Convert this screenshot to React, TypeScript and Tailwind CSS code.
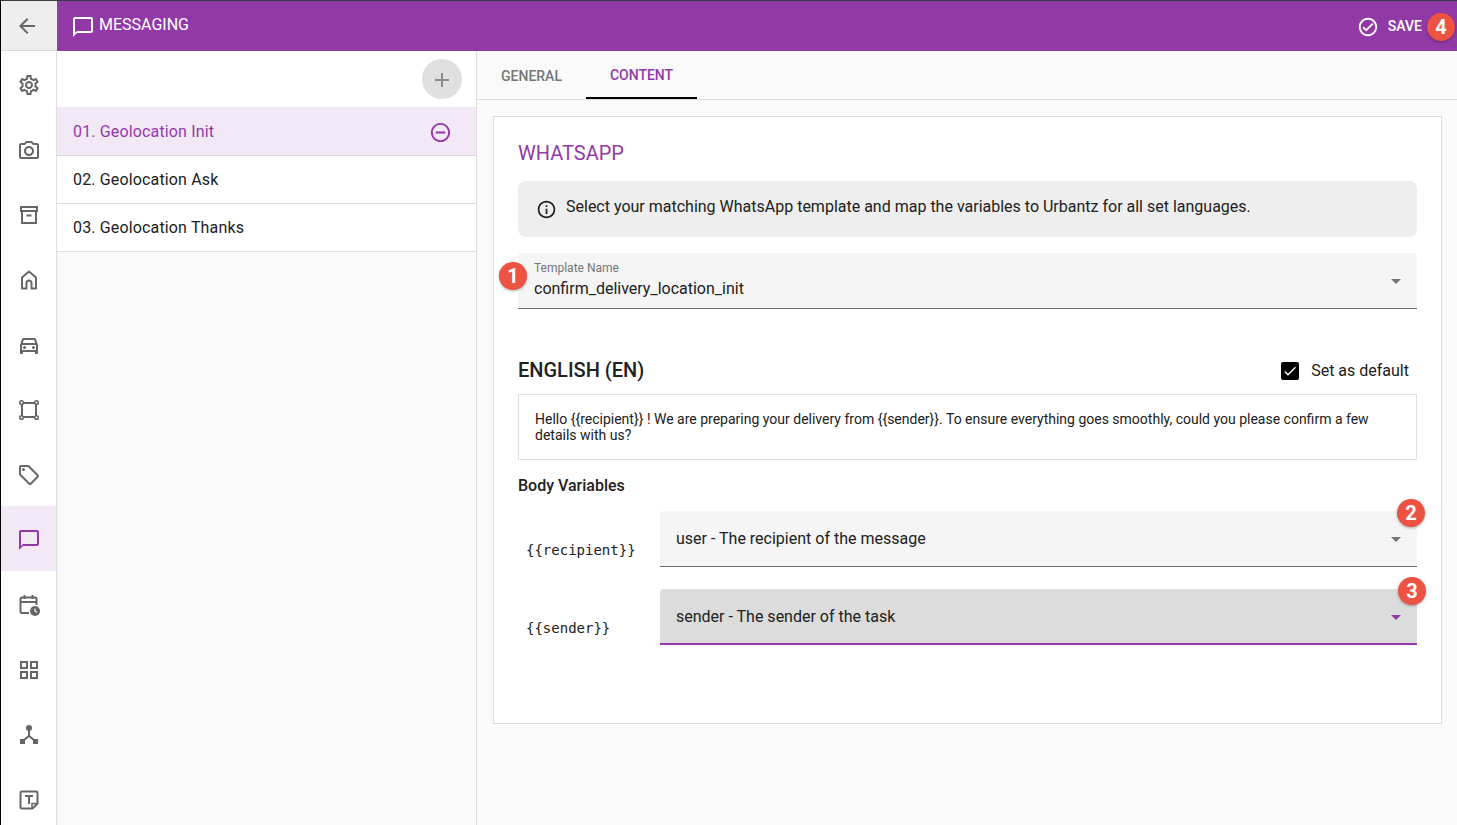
import React from "react";
import {
  MdArrowBack,
  MdOutlineSettings,
  MdOutlinePhotoCamera,
  MdOutlineDirectionsCar,
  MdOutlineLocalOffer,
  MdOutlineChatBubbleOutline,
  MdOutlineGridView,
  MdOutlineCheckCircle,
  MdOutlineInfo,
  MdAdd,
  MdOutlineRemoveCircleOutline,
  MdCheck,
} from "react-icons/md";

const Archive = () => (
  <svg width="24" height="24" viewBox="0 0 24 24" fill="none" stroke="currentColor" strokeWidth="2">
    <path d="M4 4h16v4H4zM5 8v12h14V8M9.500 12.500h5" />
  </svg>
);
const Home = () => (
  <svg width="24" height="24" viewBox="0 0 24 24" fill="none" stroke="currentColor" strokeWidth="2" strokeLinejoin="round">
    <path d="M12 3.500 5 9.500V20.500h4.500V15a2.500 2.500 0 0 1 5 0v5.500H19V9.500z" />
  </svg>
);
const Square = () => (
  <svg width="24" height="24" viewBox="0 0 24 24" fill="none" stroke="currentColor" strokeWidth="2">
    <path d="M5 6v12M19 6v12M6 5h12M6 19h12" />
    <circle cx="4.500" cy="4.500" r="1.800" strokeWidth="1.500" />
    <circle cx="19.500" cy="4.500" r="1.800" strokeWidth="1.500" />
    <circle cx="4.500" cy="19.500" r="1.800" strokeWidth="1.500" />
    <circle cx="19.500" cy="19.500" r="1.800" strokeWidth="1.500" />
  </svg>
);
const CalClock = () => (
  <svg width="24" height="24" viewBox="0 0 24 24" fill="none" stroke="currentColor" strokeWidth="2">
    <path d="M12 20H5a1.500 1.500 0 0 1-1.500-1.500V6A1.500 1.500 0 0 1 5 4.500h13A1.500 1.500 0 0 1 19.500 6v6M3.500 9h16M7.500 2v4M15.500 2v4" />
    <circle cx="18" cy="18" r="5" fill="currentColor" stroke="none" />
    <path d="M18 15.500V18l2 1.200" stroke="#fff" strokeWidth="1.200" />
  </svg>
);
const Nodes = () => (
  <svg width="24" height="24" viewBox="0 0 24 24" fill="currentColor" stroke="none">
    <circle cx="12" cy="5" r="3" />
    <rect x="3" y="16" width="5" height="5" />
    <rect x="16" y="16" width="5" height="5" />
    <path d="M11 6h2v6.500l5 4-1.300 1.500L12 14.300 7.300 18 6 16.500l5-4z" />
  </svg>
);
const NoteT = () => (
  <svg width="24" height="24" viewBox="0 0 24 24" fill="none" stroke="currentColor" strokeWidth="2">
    <path d="M5 3.500h14A1.500 1.500 0 0 1 20.500 5v10.500l-5 5H5A1.500 1.500 0 0 1 3.500 19V5A1.500 1.500 0 0 1 5 3.500z" />
    <path d="M8 8h8M12 8v8" />
    <path d="M15 20v-4.500h5" strokeWidth="1.500" />
  </svg>
);

const navIcons: React.ReactNode[] = [
  <MdOutlineSettings size={24} />,
  <MdOutlinePhotoCamera size={24} className="mt-[2px]" />,
  <Archive />,
  <Home />,
  <MdOutlineDirectionsCar size={24} />,
  <Square />,
  <MdOutlineLocalOffer size={24} />,
  <MdOutlineChatBubbleOutline size={24} />,
  <CalClock />,
  <MdOutlineGridView size={24} />,
  <Nodes />,
  <NoteT />,
];

const Badge = ({ n, className }: { n: number; className: string }) => (
  <div
    className={`absolute flex h-7 w-7 items-center justify-center rounded-full bg-[#ec5343] text-[20px] font-bold text-white shadow-[0_1px_3px_rgba(0,0,0,0.3)] ${className}`}
  >
    {n}
  </div>
);

const Arrow = ({ color }: { color: string }) => (
  <svg width="10" height="5" viewBox="0 0 10 5" className="mt-[2px] shrink-0">
    <path d="M0 0h10L5 5z" fill={color} />
  </svg>
);

export default function App() {
  return (
    <div className="flex h-[825px] w-[1457px] flex-col overflow-hidden border-l border-l-black bg-[#fafafa] font-['Roboto',sans-serif] text-[#212121]">
      <header className="flex h-[51px] shrink-0 border-t border-t-[#3c3c3c] bg-[#9239a8] text-white">
        <div className="flex w-[56px] items-center justify-center border-b border-[#dddddd] bg-[#eeeeee] pr-[4px] text-[#666666]">
          <MdArrowBack size={24} />
        </div>
        <div className="flex flex-1 items-center pl-[14px]">
          <MdOutlineChatBubbleOutline size={24} className="mt-[1px]" />
          <span className="mb-[3px] ml-[4px] text-[16px] leading-none">MESSAGING</span>
          <div className="relative ml-auto flex items-center pr-[35px]">
            <MdOutlineCheckCircle size={22} className="mt-[2px]" />
            <span className="ml-[9px] text-[14px] font-medium">SAVE</span>
            <Badge n={4} className="right-[2px] top-[-1px]" />
          </div>
        </div>
      </header>

      <div className="flex min-h-0 flex-1">
        <nav className="flex w-[56px] shrink-0 flex-col border-r border-[#e0e0e0] bg-white shadow-[1px_0_2px_rgba(0,0,0,0.06)]">
          {navIcons.map((icon, i) => (
            <div
              key={i}
              className={`flex h-[65px] shrink-0 items-center justify-center pt-[2px] ${
                i === 7 ? "bg-[#f3e9f6] text-[#9239a8]" : "text-[#666666]"
              }`}
            >
              {icon}
            </div>
          ))}
        </nav>

        <aside className="flex w-[420px] shrink-0 flex-col border-r border-[#dddddd]">
          <div className="flex h-[56px] items-center justify-end bg-white pr-[14px]">
            <div className="flex h-10 w-10 items-center justify-center rounded-full bg-[#e0e0e0] pt-[1px] text-[#8a8a8a]">
              <MdAdd size={24} />
            </div>
          </div>
          <div className="flex h-[49px] items-center justify-between border-b border-[#e0d4e4] bg-[#f3e9f6] pl-[16px] pr-[24px] pt-[2px] text-[#9239a8]">
            <span className="text-[16px] tracking-[0.15px]">01. Geolocation Init</span>
            <MdOutlineRemoveCircleOutline size={23} />
          </div>
          <div className="flex h-[48px] items-center border-b border-[#e0e0e0] bg-white pl-[16px] text-[16px] tracking-[0.15px]">
            02. Geolocation Ask
          </div>
          <div className="flex h-[48px] items-center border-b border-[#e0e0e0] bg-white pl-[16px] text-[16px] tracking-[0.15px]">
            03. Geolocation Thanks
          </div>
        </aside>

        <main className="flex min-w-0 flex-1 flex-col">
          <div className="flex h-[49px] shrink-0 items-stretch border-b border-[#dddddd]">
            <div className="flex w-[109px] items-center justify-center pt-[3px] text-[14px] font-medium text-[#757575]">
              GENERAL
            </div>
            <div className="flex w-[111px] items-center justify-center border-b-2 border-black pt-[3px] text-[14px] font-medium text-[#9239a8]">
              CONTENT
            </div>
          </div>

          <section className="ml-[16px] mt-[16px] h-[608px] w-[949px] border border-[#dddddd] bg-white pl-[24px] pr-[24px]">
            <h2 className="mt-[24px] text-[20px] leading-[24px] text-[#9239a8]">WHATSAPP</h2>

            <div className="mt-[16px] flex h-[56px] items-center rounded-[8px] bg-[#eeeeee] pl-[18px] text-[16px]">
              <MdOutlineInfo size={21} className="mt-[1px]" />
              <span className="mb-[4px] ml-[9px]">
                Select your matching WhatsApp template and map the variables to Urbantz for all set languages.
              </span>
            </div>

            <div className="relative mt-[16px] flex h-[56px] items-center justify-between rounded-t-[4px] border-b border-[#6b6b6b] bg-[#f5f5f5] pl-[16px] pr-[16px]">
              <div className="flex flex-col">
                <span className="pt-[1px] text-[12px] leading-[14px] text-[#757575]">Template Name</span>
                <span className="mt-[2px] text-[16px] leading-[24px]">confirm_delivery_location_init</span>
              </div>
              <Arrow color="#757575" />
              <Badge n={1} className="left-[-19px] top-[9px]" />
            </div>

            <div className="mt-[45px] flex h-[32px] items-center justify-between pr-[8px]">
              <h3 className="text-[20px] font-medium leading-[24px]">ENGLISH (EN)</h3>
              <div className="flex items-center pt-[2px]">
                <div className="flex h-[18px] w-[18px] items-center justify-center rounded-[2px] bg-black text-white">
                  <MdCheck size={16} />
                </div>
                <span className="mb-[1px] ml-[12px] text-[16px]">Set as default</span>
              </div>
            </div>

            <div className="mt-[8px] h-[66px] border border-[#e0e0e0] px-[16px] pt-[16px] text-[14px] leading-[16px]">
              Hello {"{{recipient}}"} ! We are preparing your delivery from {"{{sender}}"}. To ensure everything goes
              smoothly, could you please confirm a few details with us?
            </div>

            <div className="mt-[16px] text-[16px] font-medium leading-[20px]">Body Variables</div>

            <div className="mt-[15px] flex h-[56px] items-end">
              <span className="w-[142px] shrink-0 pb-[7px] pl-[8px] font-['DejaVu_Sans_Mono',monospace] text-[14px] leading-[20px]">
                {"{{recipient}}"}
              </span>
              <div className="relative flex h-[56px] flex-1 items-center justify-between rounded-t-[4px] border-b border-[#6b6b6b] bg-[#f5f5f5] pl-[16px] pr-[16px] text-[16px]">
                <span>user - The recipient of the message</span>
                <Arrow color="#757575" />
                <Badge n={2} className="right-[-8px] top-[-12px]" />
              </div>
            </div>

            <div className="mt-[22px] flex h-[56px] items-end">
              <span className="w-[142px] shrink-0 pb-[7px] pl-[8px] font-['DejaVu_Sans_Mono',monospace] text-[14px] leading-[20px]">
                {"{{sender}}"}
              </span>
              <div className="relative flex h-[56px] flex-1 items-center justify-between rounded-t-[4px] border-b-2 border-[#9239a8] bg-[#dcdcdc] pl-[16px] pr-[16px] pt-[1px] text-[16px]">
                <span>sender - The sender of the task</span>
                <Arrow color="#9239a8" />
                <Badge n={3} className="right-[-9px] top-[-12px]" />
              </div>
            </div>
          </section>
        </main>
      </div>
    </div>
  );
}
